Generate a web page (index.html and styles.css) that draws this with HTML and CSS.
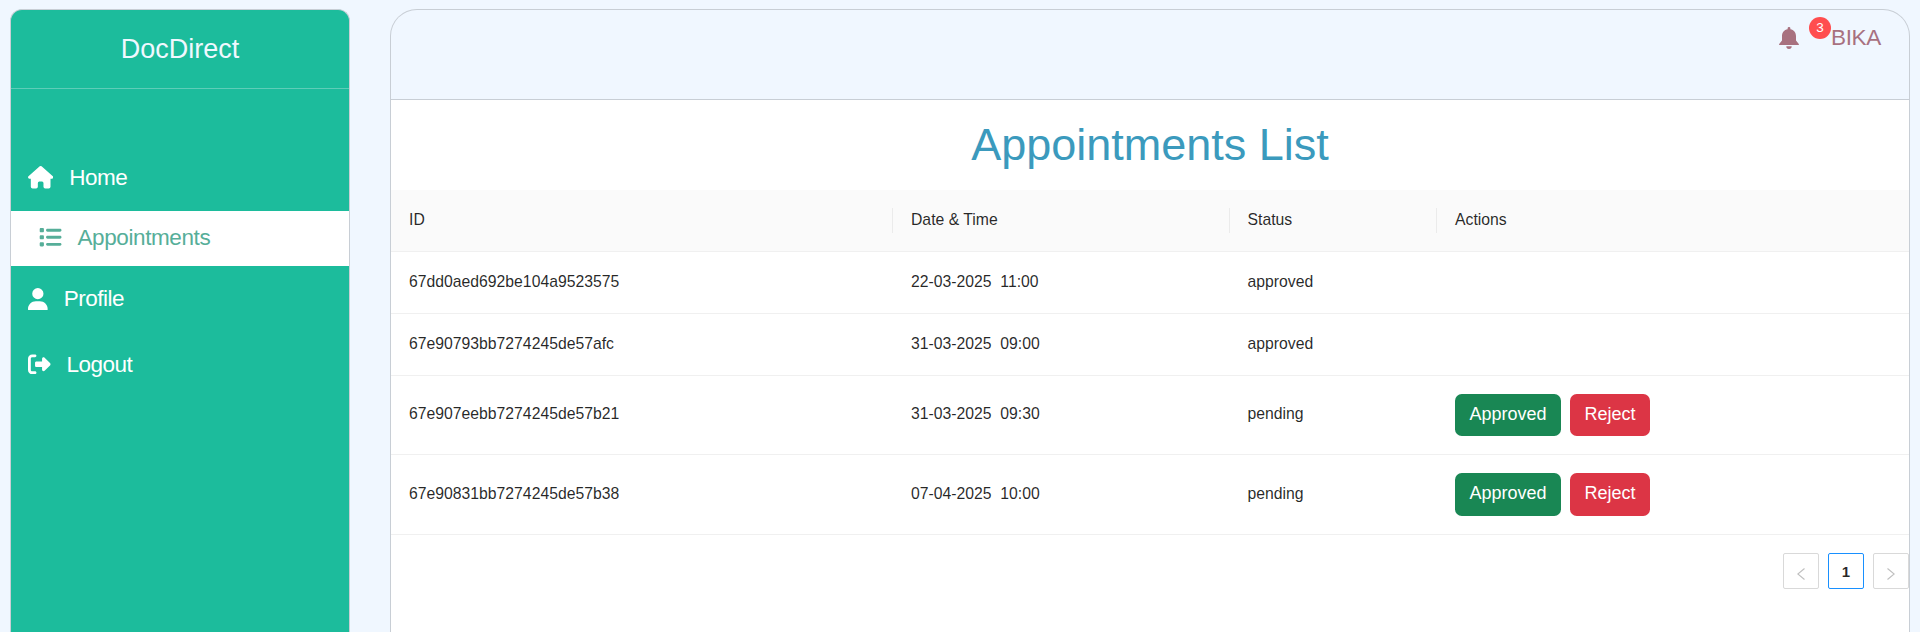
FILE: index.html
```html
<!DOCTYPE html>
<html lang="en">
<head>
<meta charset="utf-8">
<title>DocDirect</title>
<link rel="stylesheet" href="styles.css">
</head>
<body>
<div class="layout">
  <aside class="sidebar">
    <div class="logo">DocDirect</div>
    <nav class="menu">
      <a class="menu-item home"><svg viewBox="0 0 576 512"><path d="M267 8Q288-8 309 8L565 232Q576 242 576 256Q574 286 544 288H512V472Q510 510 472 512H392Q354 510 352 472V384Q350 354 320 352H256Q226 354 224 384V472Q222 510 184 512H104Q66 510 64 472V288H32Q2 286 0 256Q0 242 11 232Z"/></svg><span>Home</span></a>
      <a class="menu-item active"><svg viewBox="0 0 512 512"><path d="M40 48C26.700 48 16 58.700 16 72v48c0 13.300 10.700 24 24 24H88c13.300 0 24-10.700 24-24V72c0-13.300-10.700-24-24-24H40zM192 64c-17.700 0-32 14.300-32 32s14.300 32 32 32H480c17.700 0 32-14.300 32-32s-14.300-32-32-32H192zm0 160c-17.700 0-32 14.300-32 32s14.300 32 32 32H480c17.700 0 32-14.300 32-32s-14.300-32-32-32H192zm0 160c-17.700 0-32 14.300-32 32s14.300 32 32 32H480c17.700 0 32-14.300 32-32s-14.300-32-32-32H192zM16 232v48c0 13.300 10.700 24 24 24H88c13.300 0 24-10.700 24-24V232c0-13.300-10.700-24-24-24H40c-13.300 0-24 10.700-24 24zM40 368c-13.300 0-24 10.700-24 24v48c0 13.300 10.700 24 24 24H88c13.300 0 24-10.700 24-24V392c0-13.300-10.700-24-24-24H40z"/></svg><span>Appointments</span></a>
      <a class="menu-item profile"><svg viewBox="0 0 448 512"><path d="M224 256A128 128 0 1 0 224 0a128 128 0 1 0 0 256zm-45.700 48C79.800 304 0 383.800 0 482.300C0 498.700 13.300 512 29.700 512H418.300c16.400 0 29.700-13.300 29.700-29.700C448 383.800 368.200 304 269.700 304H178.300z"/></svg><span>Profile</span></a>
      <a class="menu-item logout"><svg viewBox="0 0 512 512"><path d="M377.900 105.900L500.700 228.700c7.200 7.200 11.300 17.100 11.300 27.300s-4.100 20.100-11.300 27.300L377.900 406.100c-6.400 6.400-15 9.900-24 9.900c-18.700 0-33.900-15.200-33.900-33.900V320H192c-17.700 0-32-14.300-32-32V224c0-17.700 14.300-32 32-32H320V129.900c0-18.700 15.200-33.900 33.900-33.900c9 0 17.600 3.600 24 9.900zM160 96H96c-17.700 0-32 14.300-32 32V384c0 17.700 14.300 32 32 32h64c17.700 0 32 14.300 32 32s-14.300 32-32 32H96c-53 0-96-43-96-96V128C0 75 43 32 96 32h64c17.700 0 32 14.300 32 32s-14.300 32-32 32z"/></svg><span>Logout</span></a>
    </nav>
  </aside>
  <main class="content">
    <header class="topbar">
      <svg class="bell" viewBox="0 0 20 22"><path d="M8.600 1.500a1.400 1.400 0 0 1 2.800 0v.7C14.800 2.900 17 5.500 17 9v4.500l2.600 3.300q.3.400.3.800v.4H.1v-.4q0-.4.3-.8L3 13.500V9c0-3.500 2.200-6.100 5.600-6.800zM7.300 19.200h5.400a2.700 2.700 0 0 1-5.400 0z"/></svg>
      <span class="badge">3</span>
      <span class="user">BIKA</span>
    </header>
    <section class="body">
      <h1 class="title">Appointments List</h1>
      <table class="table">
        <colgroup><col class="c-id"><col class="c-date"><col class="c-status"><col></colgroup>
        <thead><tr><th>ID</th><th>Date &amp; Time</th><th>Status</th><th>Actions</th></tr></thead>
        <tbody>
          <tr><td>67dd0aed692be104a9523575</td><td>22-03-2025 &nbsp;11:00</td><td>approved</td><td></td></tr>
          <tr><td>67e90793bb7274245de57afc</td><td>31-03-2025 &nbsp;09:00</td><td>approved</td><td></td></tr>
          <tr class="tall"><td>67e907eebb7274245de57b21</td><td>31-03-2025 &nbsp;09:30</td><td>pending</td><td class="buttons"><div class="actions"><button class="btn ok">Approved</button><button class="btn no">Reject</button></div></td></tr>
          <tr class="tall last"><td>67e90831bb7274245de57b38</td><td>07-04-2025 &nbsp;10:00</td><td>pending</td><td class="buttons"><div class="actions"><button class="btn ok">Approved</button><button class="btn no">Reject</button></div></td></tr>
        </tbody>
      </table>
      <div class="pager">
        <span class="page"><svg viewBox="0 0 8 12"><path d="M7.500 .5L.8 6l6.700 5.500"/></svg></span>
        <span class="page current">1</span>
        <span class="page"><svg viewBox="0 0 8 12"><path d="M.5 .5L7.200 6L.5 11.500"/></svg></span>
      </div>
    </section>
  </main>
</div>
</body>
</html>
```
FILE: styles.css
```css
* { box-sizing: border-box; }
body {
  margin: 0;
  background: #f0f7ff;
  font-family: "Liberation Sans", Arial, sans-serif;
  color: rgba(0, 0, 0, 0.85);
}
.layout {
  display: flex;
  gap: 40px;
  height: 632px;
  padding: 9px 10px 0;
}
.sidebar {
  width: 340px;
  background: #1cbc9c;
  border: 1px solid #c8ced5;
  border-bottom: 0;
  border-radius: 12px 12px 0 0;
  color: #f0f8ff;
  overflow: hidden;
}
.logo {
  height: 79px;
  border-bottom: 1px solid #5ecdb8;
  font-size: 27px;
  line-height: 78px;
  text-align: center;
}
.menu { padding-top: 60px; }
.menu-item {
  display: flex;
  align-items: center;
  gap: 16px;
  height: 56px;
  padding-left: 17px;
  font-size: 22.5px;
  letter-spacing: -0.5px;
  color: #fff;
}
.menu-item svg { height: 22.5px; fill: currentColor; }
.menu-item.active {
  height: 55px;
  margin: 6px 0;
  padding: 0 0 2px 28px;
  letter-spacing: -0.4px;
  background: #fff;
  color: #56ae99;
}
.home { padding-top: 1px; }
.profile { padding-bottom: 2px; }
.logout { margin-top: 10px; padding-bottom: 3px; }
.content {
  display: flex;
  flex-direction: column;
  width: 1520px;
  border: 1px solid #c8ced5;
  border-bottom: 0;
  border-radius: 27px 27px 0 0;
  overflow: hidden;
}
.topbar {
  display: flex;
  justify-content: flex-end;
  height: 90px;
  padding: 5px 28px 0 0;
  border-bottom: 1px solid #c8ced5;
  color: #a8717f;
}
.bell { width: 20px; height: 22px; margin: 12px 10px 0 0; fill: currentColor; }
.badge {
  width: 22px;
  height: 22px;
  margin-top: 2px;
  border-radius: 50%;
  background: #ff4d4f;
  color: #fff;
  font-size: 13.5px;
  line-height: 22px;
  text-align: center;
}
.user { font-size: 22.5px; line-height: 46px; letter-spacing: -0.3px; }
.body { flex: 1; background: #fff; }
.title {
  margin: 0;
  height: 90px;
  font-size: 45px;
  font-weight: 400;
  line-height: 90px;
  text-align: center;
  color: #3b9abd;
}
.table {
  width: 100%;
  table-layout: fixed;
  border-collapse: separate;
  border-spacing: 0;
  font-size: 15.75px;
  line-height: 24px;
}
.c-id { width: 502px; }
.c-date { width: 336.5px; }
.c-status { width: 207.5px; }
.table th, .table td {
  height: 62px;
  padding: 0 18px 2px;
  border-bottom: 1px solid #f0f0f0;
  font-weight: 400;
  text-align: left;
  vertical-align: middle;
}
.table th {
  background: linear-gradient(#ebebeb, #ebebeb) right center / 1px 25px no-repeat #fafafa;
}
.table th:last-child { background: #fafafa; }
.table .tall td { height: 79px; }
.table .last td { height: 80px; }
.table td.buttons { padding-bottom: 0; }
.actions { display: flex; gap: 9px; }
.btn {
  height: 42px;
  padding: 0 0 2px;
  border: 0;
  border-radius: 6.75px;
  font: 18px "Liberation Sans", Arial, sans-serif;
  color: #fff;
}
.last .btn { height: 43px; }
.ok { width: 106px; background: #198754; }
.no { width: 80px; background: #dc3545; }
.pager {
  display: flex;
  justify-content: flex-end;
  gap: 9px;
  padding-top: 18px;
}
.page {
  display: flex;
  align-items: center;
  justify-content: center;
  width: 36px;
  height: 36px;
  border: 1px solid #d9d9d9;
  border-radius: 2px;
  font-size: 15.75px;
}
.page svg {
  width: 8px;
  height: 12px;
  margin-top: 5px;
  fill: none;
  stroke: #bfbfbf;
  stroke-width: 1.1;
}
.page.current { border-color: #1890ff; font-size: 15px; font-weight: 700; }
```
